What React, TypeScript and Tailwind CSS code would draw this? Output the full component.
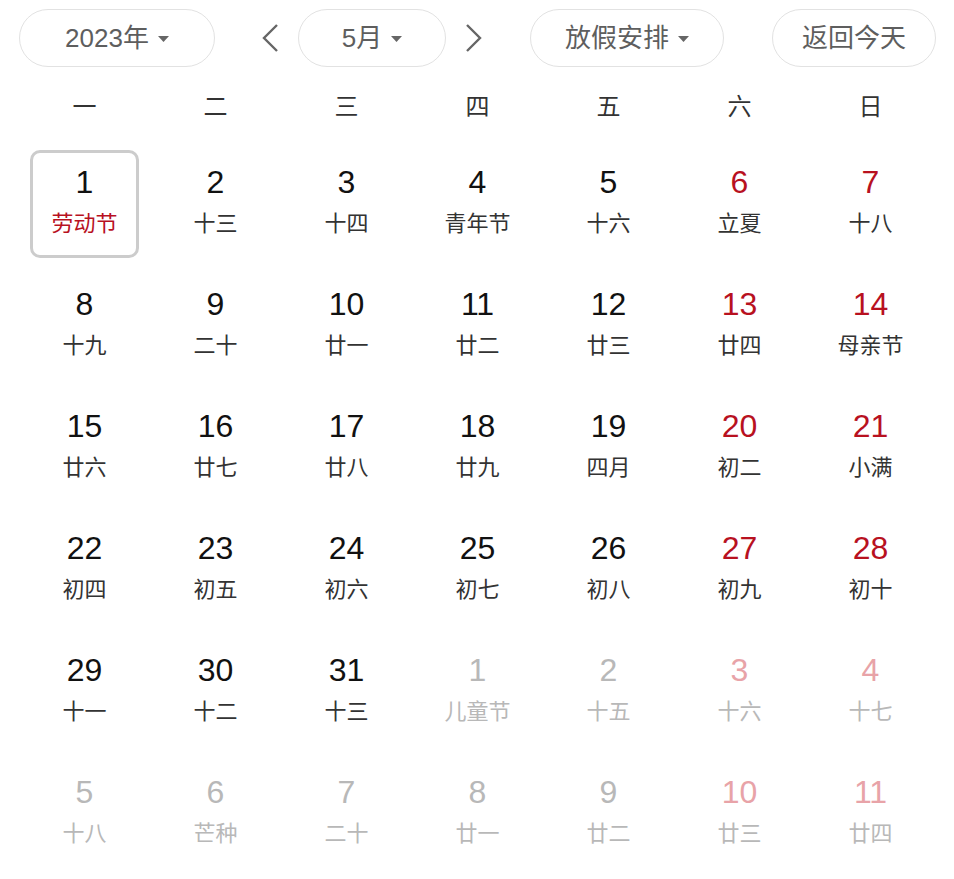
import React from 'react';

type Day = { n: number; l: string; other?: boolean; festival?: boolean };

const days: Day[] = [
  { n: 1, l: '劳动节', festival: true },
  { n: 2, l: '十三' },
  { n: 3, l: '十四' },
  { n: 4, l: '青年节' },
  { n: 5, l: '十六' },
  { n: 6, l: '立夏' },
  { n: 7, l: '十八' },
  { n: 8, l: '十九' },
  { n: 9, l: '二十' },
  { n: 10, l: '廿一' },
  { n: 11, l: '廿二' },
  { n: 12, l: '廿三' },
  { n: 13, l: '廿四' },
  { n: 14, l: '母亲节' },
  { n: 15, l: '廿六' },
  { n: 16, l: '廿七' },
  { n: 17, l: '廿八' },
  { n: 18, l: '廿九' },
  { n: 19, l: '四月' },
  { n: 20, l: '初二' },
  { n: 21, l: '小满' },
  { n: 22, l: '初四' },
  { n: 23, l: '初五' },
  { n: 24, l: '初六' },
  { n: 25, l: '初七' },
  { n: 26, l: '初八' },
  { n: 27, l: '初九' },
  { n: 28, l: '初十' },
  { n: 29, l: '十一' },
  { n: 30, l: '十二' },
  { n: 31, l: '十三' },
  { n: 1, l: '儿童节', other: true },
  { n: 2, l: '十五', other: true },
  { n: 3, l: '十六', other: true },
  { n: 4, l: '十七', other: true },
  { n: 5, l: '十八', other: true },
  { n: 6, l: '芒种', other: true },
  { n: 7, l: '二十', other: true },
  { n: 8, l: '廿一', other: true },
  { n: 9, l: '廿二', other: true },
  { n: 10, l: '廿三', other: true },
  { n: 11, l: '廿四', other: true },
];

const weekdays = ['一', '二', '三', '四', '五', '六', '日'];

const font = { fontFamily: '"Liberation Sans", Arial, "Noto Sans CJK SC", sans-serif' };

function Caret() {
  return (
    <svg width="11" height="6" viewBox="0 0 11 6" className="ml-[9px] mt-[2px]">
      <polygon points="0,0 11,0 5.5,6" fill="#666" />
    </svg>
  );
}

function Chevron({ dir }: { dir: 'left' | 'right' }) {
  return (
    <svg width="18" height="30" viewBox="0 0 18 30" fill="none" stroke="#666" strokeWidth="2.4">
      {dir === 'left' ? <polyline points="16,2 3,15 16,28" /> : <polyline points="2,2 15,15 2,28" />}
    </svg>
  );
}

function Pill({ w, children }: { w: string; children: React.ReactNode }) {
  return (
    <div
      className={`${w} h-[58px] rounded-full border border-[#e2e2e2] flex items-center justify-center text-[26px] text-[#5e5e5e]`}
    >
      {children}
    </div>
  );
}

export default function App() {
  return (
    <div className="w-[954px] h-[879px] bg-white overflow-hidden" style={font}>
      {/* Toolbar */}
      <div className="flex items-center pt-[9px] pl-[19px]">
        <Pill w="w-[196px]">
          2023年
          <Caret />
        </Pill>
        <div className="ml-[46px] mr-[19px] flex items-center">
          <Chevron dir="left" />
        </div>
        <Pill w="w-[148px]">
          5月
          <Caret />
        </Pill>
        <div className="ml-[19px] mr-[47px] flex items-center">
          <Chevron dir="right" />
        </div>
        <Pill w="w-[194px]">
          放假安排
          <Caret />
        </Pill>
        <div className="ml-[48px]">
          <Pill w="w-[164px]">返回今天</Pill>
        </div>
      </div>

      {/* Weekdays */}
      <div className="grid grid-cols-7 w-[917px] ml-[19px] h-[76px] items-center pt-[3px]">
        {weekdays.map((w) => (
          <div key={w} className="text-center text-[24px] text-[#333]">
            {w}
          </div>
        ))}
      </div>

      {/* Days */}
      <div className="grid grid-cols-7 w-[917px] ml-[19px]">
        {days.map((d, i) => {
          const weekend = i % 7 >= 5;
          let numColor = 'text-[#111]';
          let lunarColor = 'text-[#333]';
          if (d.other) {
            numColor = weekend ? 'text-[#e8a3a8]' : 'text-[#b8b8b8]';
            lunarColor = 'text-[#b8b8b8]';
          } else if (weekend) {
            numColor = 'text-[#b8111f]';
          }
          if (d.festival) lunarColor = 'text-[#b8111f]';
          const selected = i === 0;
          return (
            <div key={i} className="h-[122px] flex items-center justify-center">
              <div
                className={`w-[109px] h-[108px] rounded-[10px] flex flex-col items-center pt-[11px] border-[3px] ${
                  selected ? 'border-[#cccccc]' : 'border-transparent'
                }`}
              >
                <div className={`text-[32px] leading-[36px] ${numColor}`}>{d.n}</div>
                <div className={`mt-[10px] text-[22px] leading-[28px] ${lunarColor}`}>{d.l}</div>
              </div>
            </div>
          );
        })}
      </div>
    </div>
  );
}
